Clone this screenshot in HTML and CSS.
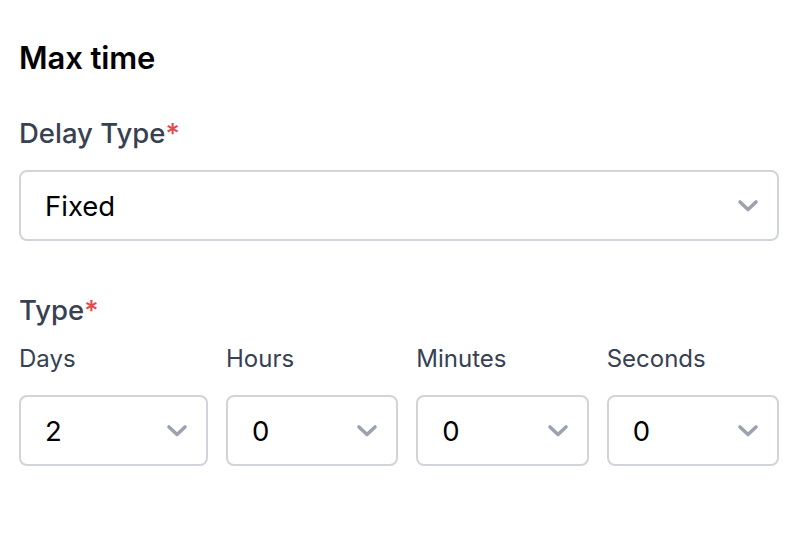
FILE: index.html
```html
<!DOCTYPE html>
<html>
<head>
<meta charset="utf-8">
<link rel="stylesheet" href="styles.css">
</head>
<body>
<div class="panel">
  <h1 class="title">Max time</h1>
  <div class="field">
    <div class="label">Delay Type<span class="req">*</span></div>
    <div class="select wide">
      <span class="value">Fixed</span>
      <svg class="chev" viewBox="0 0 24 14" width="24" height="14"><polyline points="4,3 12,10.5 20,3" fill="none" stroke="#9ca3af" stroke-width="3.6" stroke-linecap="round" stroke-linejoin="round"/></svg>
    </div>
  </div>
  <div class="field type">
    <div class="label">Type<span class="req">*</span></div>
    <div class="grid">
      <div class="col">
        <div class="sublabel">Days</div>
        <div class="select"><span class="value">2</span><svg class="chev" viewBox="0 0 24 14" width="24" height="14"><polyline points="4,3 12,10.5 20,3" fill="none" stroke="#9ca3af" stroke-width="3.6" stroke-linecap="round" stroke-linejoin="round"/></svg></div>
      </div>
      <div class="col">
        <div class="sublabel">Hours</div>
        <div class="select"><span class="value">0</span><svg class="chev" viewBox="0 0 24 14" width="24" height="14"><polyline points="4,3 12,10.5 20,3" fill="none" stroke="#9ca3af" stroke-width="3.6" stroke-linecap="round" stroke-linejoin="round"/></svg></div>
      </div>
      <div class="col">
        <div class="sublabel">Minutes</div>
        <div class="select"><span class="value">0</span><svg class="chev" viewBox="0 0 24 14" width="24" height="14"><polyline points="4,3 12,10.5 20,3" fill="none" stroke="#9ca3af" stroke-width="3.6" stroke-linecap="round" stroke-linejoin="round"/></svg></div>
      </div>
      <div class="col">
        <div class="sublabel">Seconds</div>
        <div class="select"><span class="value">0</span><svg class="chev" viewBox="0 0 24 14" width="24" height="14"><polyline points="4,3 12,10.5 20,3" fill="none" stroke="#9ca3af" stroke-width="3.6" stroke-linecap="round" stroke-linejoin="round"/></svg></div>
      </div>
    </div>
  </div>
</div>
</body>
</html>
```

FILE: styles.css
```css
html, body {
  margin: 0;
  padding: 0;
  background: #ffffff;
}
body {
  font-family: Inter, "Noto Sans", sans-serif;
  color: #000;
}
.panel {
  width: 760px;
  padding: 38px 0 0 19px;
}
.title {
  margin: 0;
  font-size: 31px;
  font-weight: 600;
  line-height: 40px;
  color: #000;
  letter-spacing: -0.1px;
}
.field {
  margin-top: 39px;
}
.field.type {
  margin-top: 53px;
}
.label {
  font-size: 27.5px;
  line-height: 32px;
  font-weight: 500;
  color: #374151;
}
.req {
  color: #e5484d;
}
.select {
  box-sizing: border-box;
  height: 71px;
  border: 2px solid #d1d5db;
  border-radius: 8px;
  display: flex;
  align-items: center;
  justify-content: space-between;
  padding: 0 17px 0 24px;
  background: #fff;
}
.wide {
  margin-top: 21px;
}
.value {
  font-size: 27.5px;
  color: #000;
}
.chev {
  display: block;
}
.grid {
  margin-top: 18px;
  display: grid;
  grid-template-columns: 189px 1fr 1fr 1fr;
  column-gap: 18px;
}
.sublabel {
  font-size: 24px;
  line-height: 30px;
  color: #374151;
  margin-bottom: 21px;
}
```
